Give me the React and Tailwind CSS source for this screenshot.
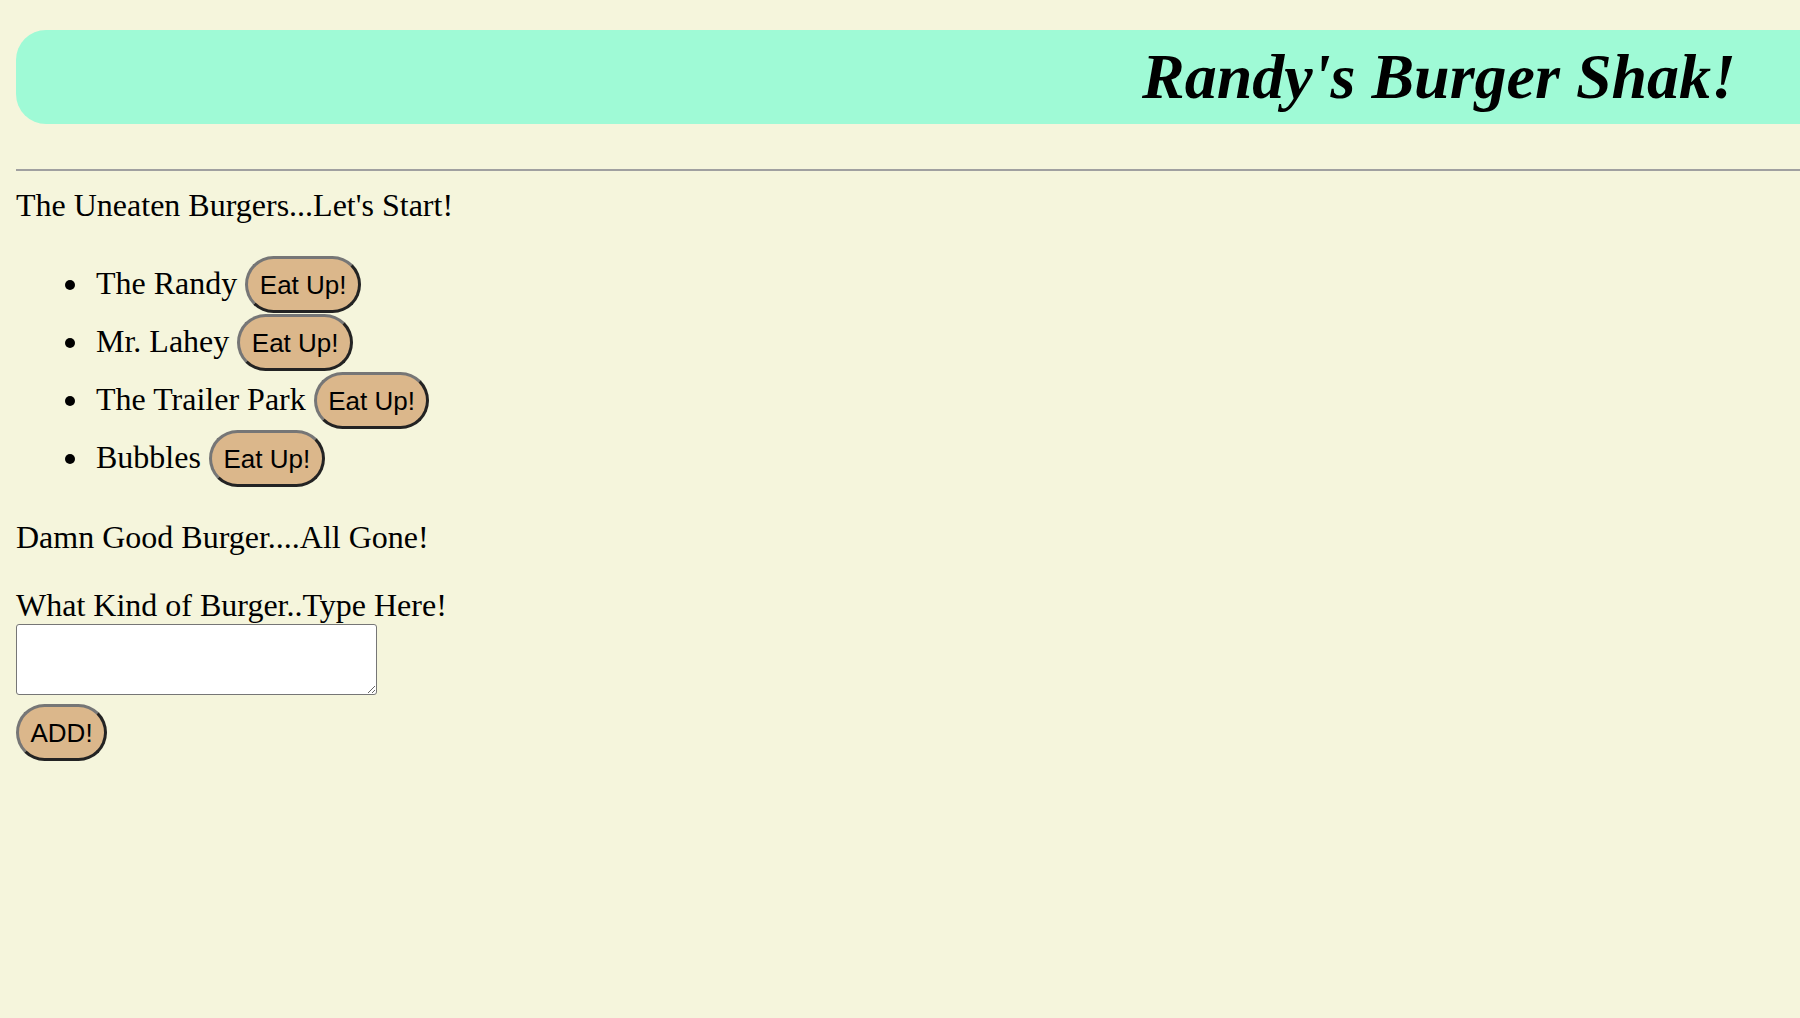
import { useState } from "react";

const serif = { fontFamily: '"Liberation Serif", "Times New Roman", serif' };
const sans = { fontFamily: '"Liberation Sans", Arial, sans-serif' };

function PillButton({ children, onClick }) {
  return (
    <button
      onClick={onClick}
      style={sans}
      className="h-[57px] px-[11.5px] rounded-full bg-[#dbb78b] text-black text-[26px] leading-none border-[3px] border-t-[#767676] border-l-[#767676] border-r-[#232323] border-b-[#232323]"
    >
      {children}
    </button>
  );
}

export default function App() {
  const [burgers, setBurgers] = useState([
    "The Randy",
    "Mr. Lahey",
    "The Trailer Park",
    "Bubbles",
  ]);
  const [eaten, setEaten] = useState([]);
  const [newBurger, setNewBurger] = useState("");

  const eat = (name) => {
    setBurgers(burgers.filter((b) => b !== name));
    setEaten([...eaten, name]);
  };

  const addBurger = () => {
    if (!newBurger.trim()) return;
    setBurgers([...burgers, newBurger.trim()]);
    setNewBurger("");
  };

  return (
    <div className="min-h-screen bg-[#f5f5dc] px-4 pt-[30px] overflow-x-hidden text-black" style={serif}>
      {/* Header */}
      <header className="h-[94px] -mr-4 rounded-l-[30px] bg-[#9ffad6] flex items-center justify-end pr-16">
        <h1 className="text-[64px] font-bold italic leading-none">Randy's Burger Shak!</h1>
      </header>

      <div className="mt-[45px] -mr-4 border-t-2 border-[#a0a0a0]" />

      <p className="mt-[16px] text-[32px] leading-[36px]">The Uneaten Burgers...Let's Start!</p>

      <ul className="mt-[33px] pl-[49px]">
        {burgers.map((b) => (
          <li key={b} className="h-[58px] flex items-baseline text-[32px] leading-[36px]">
            <span className="self-center w-[10px] h-[10px] rounded-full bg-black mr-[21px]" />
            <span className="mr-2">{b}</span>
            <PillButton onClick={() => eat(b)}>Eat Up!</PillButton>
          </li>
        ))}
      </ul>

      <p className="mt-[31px] text-[32px] leading-[36px]">
        Damn Good Burger....{eaten.length === 0 ? "All Gone!" : eaten.join(", ")}
      </p>

      <p className="mt-[32px] text-[32px] leading-[36px]">What Kind of Burger..Type Here!</p>
      <textarea
        value={newBurger}
        onChange={(e) => setNewBurger(e.target.value)}
        className="block mt-[1px] w-[361px] h-[71px] bg-white border border-[#767676] rounded-[3px]"
      />
      <div className="mt-[9px]">
        <PillButton onClick={addBurger}>ADD!</PillButton>
      </div>
    </div>
  );
}
